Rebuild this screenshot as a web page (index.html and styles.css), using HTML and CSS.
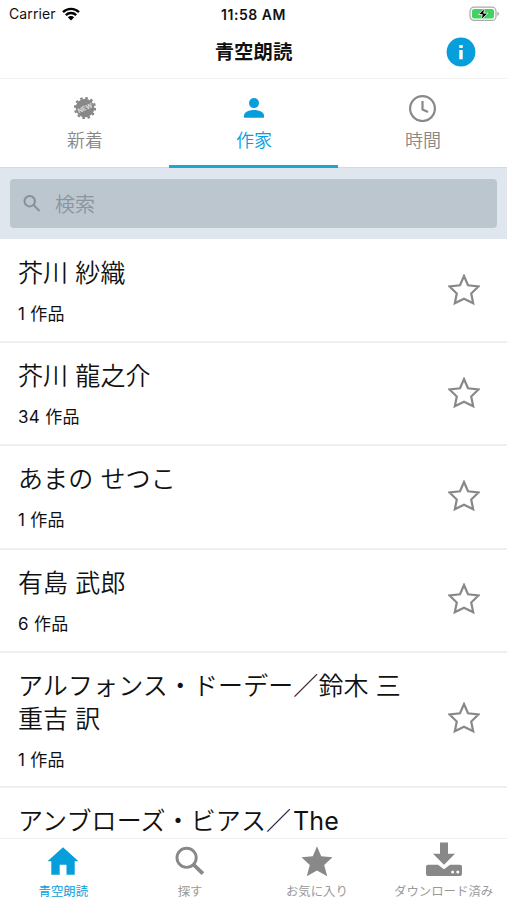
FILE: index.html
```html
<!DOCTYPE html>
<html lang="ja">
<head>
    <meta charset="UTF-8">
    <meta name="viewport" content="width=device-width, initial-scale=1.0">
    <title>青空朗読</title>
    <link rel="stylesheet" href="styles.css">
</head>
<body>
    <div class="app">
      <div class="status">
        <div class="carrier">
          <span>Carrier</span>
          <svg class="wifi" viewBox="0 0 18 14">
            <path d="M1 5.2a11.5 11.5 0 0 1 16 0M3.8 8.1a7.5 7.5 0 0 1 10.4 0" fill="none" stroke="#000" stroke-width="2.3"/>
            <path d="M9 13.5L5.8 10.3a4.6 4.6 0 0 1 6.4 0z"/>
          </svg>
        </div>
        <div class="time">11:58 AM</div>
        <svg class="battery" viewBox="0 0 32 16">
          <rect x="1" y="1.2" width="26" height="13.2" rx="4" fill="#fff" stroke="#aaa" stroke-width="1.2"/>
          <rect x="3" y="3.1" width="22" height="9.4" rx="2.2" fill="#3fd35f"/>
          <path d="M28.3 5.7v4.2q1.8-.7 1.8-2.1t-1.8-2.1z" fill="#aaa"/>
          <path d="M15.6 2.2L9.3 8.6h4l-1.1 5.1 6.7-6.5h-4.2z" stroke="#fff" stroke-width=".8"/>
        </svg>
      </div>
      <header>
        <h1>青空朗読</h1>
        <svg class="info" viewBox="0 0 30 30">
          <circle cx="15" cy="15" r="14.4" fill="#069fdb"/>
          <path d="M13.3 8h3.4v3h-3.4zM13.3 13h3.4v9.3h-3.4z" fill="#fff"/>
        </svg>
      </header>
      <nav class="tabs">
        <div class="tab">
          <svg viewBox="0 0 28 28">
            <circle cx="14" cy="14" r="9.3" fill="#888"/>
            <circle cx="14" cy="14" r="10" fill="none" stroke="#888" stroke-width="2.2" stroke-dasharray="2.6 2.636"/>
            <text class="new" x="14" y="16.3" transform="rotate(-25 14 14)">NEW</text>
          </svg>
          <span>新着</span>
        </div>
        <div class="tab active">
          <svg viewBox="0 0 28 28">
            <circle cx="14" cy="9.1" r="5"/>
            <path d="M4 23.8v-2.3c0-3.5 5-5.6 10-5.6s10 2.1 10 5.6v2.3z"/>
          </svg>
          <span>作家</span>
        </div>
        <div class="tab">
          <svg viewBox="0 0 28 28" fill="none" stroke="#888" stroke-width="2.2">
            <circle cx="13.5" cy="14.6" r="12.4"/>
            <path d="M13.5 7v8.6l5.5 2.5"/>
          </svg>
          <span>時間</span>
        </div>
      </nav>
      <div class="search">
        <div class="search-box">
          <svg viewBox="0 0 18 18" fill="none" stroke="#84909a" stroke-width="2">
            <circle cx="6.7" cy="6.2" r="5.2"/>
            <path d="M10.5 10l6 6"/>
          </svg>
          <span>検索</span>
        </div>
      </div>
      <main>
        <div class="row">
          <div class="author">
            <div class="name">芥川 紗織</div>
            <div class="count">1 作品</div>
          </div>
          <svg class="star" viewBox="0 0 32 32"><path d="M16 2l4 9.3 10.4 1.2-7.2 7 2 9.8L16 24.7l-9.2 4.6 2-9.8-7.2-7L12 11.3z"/></svg>
        </div>
        <div class="row">
          <div class="author">
            <div class="name">芥川 龍之介</div>
            <div class="count">34 作品</div>
          </div>
          <svg class="star" viewBox="0 0 32 32"><path d="M16 2l4 9.3 10.4 1.2-7.2 7 2 9.8L16 24.7l-9.2 4.6 2-9.8-7.2-7L12 11.3z"/></svg>
        </div>
        <div class="row">
          <div class="author">
            <div class="name">あまの せつこ</div>
            <div class="count">1 作品</div>
          </div>
          <svg class="star" viewBox="0 0 32 32"><path d="M16 2l4 9.3 10.4 1.2-7.2 7 2 9.8L16 24.7l-9.2 4.6 2-9.8-7.2-7L12 11.3z"/></svg>
        </div>
        <div class="row">
          <div class="author">
            <div class="name">有島 武郎</div>
            <div class="count">6 作品</div>
          </div>
          <svg class="star" viewBox="0 0 32 32"><path d="M16 2l4 9.3 10.4 1.2-7.2 7 2 9.8L16 24.7l-9.2 4.6 2-9.8-7.2-7L12 11.3z"/></svg>
        </div>
        <div class="row tall">
          <div class="author">
            <div class="name">アルフォンス・ドーデー／鈴木 三<br>重吉 訳</div>
            <div class="count">1 作品</div>
          </div>
          <svg class="star" viewBox="0 0 32 32"><path d="M16 2l4 9.3 10.4 1.2-7.2 7 2 9.8L16 24.7l-9.2 4.6 2-9.8-7.2-7L12 11.3z"/></svg>
        </div>
        <div class="row">
          <div class="author">
            <div class="name">アンブローズ・ビアス／<span class="latin">The</span></div>
          </div>
        </div>
      </main>
      <footer>
        <div class="item active">
          <svg viewBox="0 0 38 38"><path d="M19 5.3L34.5 19.2h-3.8v13.6h-8.2v-10h-6.8v10H7.3V19.2H3.5z"/></svg>
          <span>青空朗読</span>
        </div>
        <div class="item">
          <svg viewBox="0 0 38 38">
            <circle cx="15.6" cy="15.8" r="9.6" fill="none" stroke="#888" stroke-width="2.9"/>
            <path d="M22.9 23l9 8.7" stroke="#888" stroke-width="3.8"/>
          </svg>
          <span>探す</span>
        </div>
        <div class="item">
          <svg viewBox="0 0 38 38"><path d="M19 4.3l4.2 10 11.3 1-8.3 7.6 3 11.3L19 28.6l-10.2 5.6 3-11.3-8.3-7.6 11.3-1z"/></svg>
          <span>お気に入り</span>
        </div>
        <div class="item">
          <svg viewBox="0 0 38 38">
            <path d="M15 .5h8v11.2h7L19 22.7 8 11.7h7z"/>
            <path d="M3 22.8h10l6 4.4 6-4.4h10a2 2 0 0 1 2 2v7.3a2 2 0 0 1-2 2H3a2 2 0 0 1-2-2v-7.3a2 2 0 0 1 2-2z"/>
            <circle cx="27.6" cy="30" r="1.5" fill="#fff"/>
            <circle cx="32.8" cy="30" r="1.5" fill="#fff"/>
          </svg>
          <span>ダウンロード済み</span>
        </div>
      </footer>
    </div>
</body>
</html>
```
FILE: styles.css
```css
* {
  margin: 0;
  padding: 0;
  box-sizing: border-box;
}

body {
  font-family: Inter, "Noto Sans CJK JP", sans-serif;
  background-color: #fff;
  color: #111;
}

svg {
  display: block;
  flex-shrink: 0;
}

.app {
  height: 900px;
  display: flex;
  flex-direction: column;
  overflow: hidden;
}

.status {
  height: 27px;
  display: grid;
  grid-template-columns: 1fr auto 1fr;
  align-items: center;
  padding: 0 6px 0 9px;
  font-size: 14px;
  line-height: 27px;
}

.carrier {
  display: flex;
  align-items: center;
  gap: 6px;
  padding-bottom: 1px;
  letter-spacing: .1px;
}

.wifi {
  width: 18px;
  height: 14px;
}

.time {
  margin-left: -3px;
  font-weight: 600;
  letter-spacing: .55px;
}

.battery {
  width: 32px;
  height: 16px;
  margin-bottom: 1px;
  justify-self: end;
}

header {
  height: 52px;
  display: grid;
  grid-template-columns: 1fr auto 1fr;
  align-items: center;
  padding: 0 31.5px 2px;
  border-bottom: 1px solid #f3f3f3;
}

h1 {
  grid-column: 2;
  font-size: 19.4px;
  font-weight: 700;
  line-height: 28px;
}

.info {
  width: 30px;
  height: 30px;
  justify-self: end;
}

.tabs {
  height: 89px;
  display: flex;
}

.tab {
  flex: 1;
  display: flex;
  flex-direction: column;
  align-items: center;
  padding-top: 15px;
  border-bottom: 1px solid #d5dade;
  color: #888;
  font-size: 18px;
  font-weight: 350;
  line-height: 38px;
}

.tab svg {
  width: 28px;
  height: 28px;
}

.tab span {
  padding-left: 1px;
}

.tab.active {
  color: #069fdb;
  fill: #069fdb;
  border-bottom: 3px solid #21a4d3;
}

.new {
  font-size: 6.5px;
  font-weight: 700;
  text-anchor: middle;
  fill: #ddd;
}

.search {
  height: 71px;
  padding: 11px 10px;
  background-color: #dfe6ed;
}

.search-box {
  height: 49px;
  display: flex;
  align-items: center;
  gap: 14px;
  padding-left: 13px;
  border-radius: 4px;
  background-color: #bbc6cf;
  color: #8a959e;
  font-size: 20px;
  font-weight: 350;
}

.search-box svg {
  width: 18px;
  height: 18px;
}

main {
  flex: 1;
  min-height: 0;
  padding-top: 1px;
  overflow: hidden;
}

.row {
  height: 103.2px;
  display: flex;
  justify-content: space-between;
  align-items: center;
  padding: 0 27px 0 18px;
  border-bottom: 2px solid #efefef;
}

.row.tall {
  height: 135px;
}

.author {
  align-self: flex-start;
  padding-top: 17px;
}

.name {
  font-size: 25px;
  font-weight: 350;
  line-height: 33px;
  letter-spacing: .1px;
  white-space: nowrap;
}

.latin {
  margin-left: 2px;
  font-weight: 400;
}

.count {
  margin-top: 11px;
  font-size: 17px;
  line-height: 26px;
  letter-spacing: .3px;
}

.star {
  width: 32px;
  height: 32px;
  margin-bottom: 2px;
  fill: none;
  stroke: #888;
  stroke-width: 2.2;
}

footer {
  height: 62px;
  display: flex;
  border-top: 1px solid #f1f1f1;
  background-color: #fff;
}

.item {
  flex: 1;
  display: flex;
  flex-direction: column;
  align-items: center;
  padding-top: 3px;
  color: #999;
  fill: #888;
  font-size: 12.4px;
  line-height: 23px;
  white-space: nowrap;
}

.item svg {
  width: 38px;
  height: 38px;
}

.item.active {
  color: #069fdb;
  fill: #069fdb;
}
```
